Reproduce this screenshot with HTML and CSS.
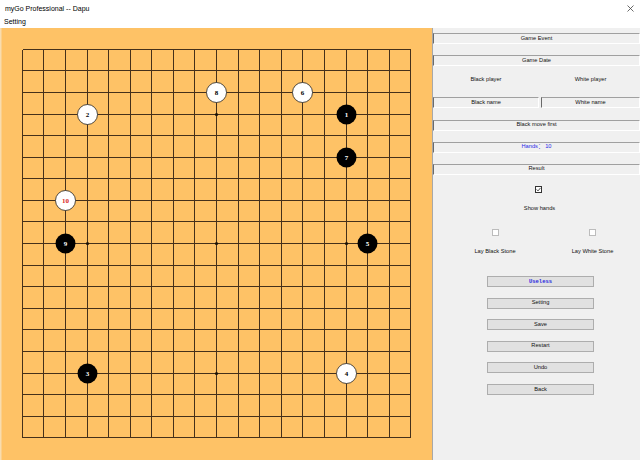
FILE: index.html
```html
<!DOCTYPE html>
<html>
<head>
<meta charset="utf-8">
<link rel="stylesheet" href="styles.css">
</head>
<body>
<div class="window">
  <div class="titlebar">
    <span class="title">myGo Professional -- Dapu</span>
    <svg class="close" width="7" height="7" viewBox="0 0 7 7"><path d="M0.5 0.5L6.5 6.5M6.5 0.5L0.5 6.5" stroke="#444" stroke-width="0.8"/></svg>
  </div>
  <div class="menubar"><span class="menu-item">Setting</span></div>
  <div class="main">
    <div class="board">
      <svg width="432" height="432" viewBox="0 0 432 432">
        <rect x="0" y="0" width="432" height="432" fill="#fec266"/>
        <rect x="0" y="0" width="1.5" height="432" fill="#f8dcae"/>
        <path shape-rendering="crispEdges" stroke="#45301a" stroke-width="1" fill="none"
          d="M22.5 21.5V409.5M43.5 21.5V409.5M65.5 21.5V409.5M87.5 21.5V409.5M108.5 21.5V409.5M130.5 21.5V409.5M151.5 21.5V409.5M173.5 21.5V409.5M194.5 21.5V409.5M216.5 21.5V409.5M238.5 21.5V409.5M259.5 21.5V409.5M281.5 21.5V409.5M302.5 21.5V409.5M324.5 21.5V409.5M346.5 21.5V409.5M367.5 21.5V409.5M389.5 21.5V409.5M410.5 21.5V409.5
          M22.5 21.5H410.5M22.5 42.5H410.5M22.5 64.5H410.5M22.5 86.5H410.5M22.5 107.5H410.5M22.5 129.5H410.5M22.5 150.5H410.5M22.5 172.5H410.5M22.5 193.5H410.5M22.5 215.5H410.5M22.5 237.5H410.5M22.5 258.5H410.5M22.5 280.5H410.5M22.5 301.5H410.5M22.5 323.5H410.5M22.5 345.5H410.5M22.5 366.5H410.5M22.5 388.5H410.5M22.5 409.5H410.5"/>
        <g fill="#1a1208">
          <circle cx="87.5" cy="86.5" r="1.6"/><circle cx="216.5" cy="86.5" r="1.6"/><circle cx="346.5" cy="86.5" r="1.6"/>
          <circle cx="87.5" cy="215.5" r="1.6"/><circle cx="216.5" cy="215.5" r="1.6"/><circle cx="346.5" cy="215.5" r="1.6"/>
          <circle cx="87.5" cy="345.5" r="1.6"/><circle cx="216.5" cy="345.5" r="1.6"/><circle cx="346.5" cy="345.5" r="1.6"/>
        </g>
        <g class="stones">
          <circle class="black" cx="346.5" cy="86.5" r="10"/><text class="num-w" x="346.5" y="89">1</text>
          <circle class="white" cx="87.5" cy="86.5" r="10"/><text class="num-b" x="87.5" y="89">2</text>
          <circle class="black" cx="87.5" cy="345.5" r="10"/><text class="num-w" x="87.5" y="348">3</text>
          <circle class="white" cx="346.5" cy="345.5" r="10"/><text class="num-b" x="346.5" y="348">4</text>
          <circle class="black" cx="367.5" cy="215.5" r="10"/><text class="num-w" x="367.5" y="218">5</text>
          <circle class="white" cx="302.5" cy="64.5" r="10"/><text class="num-b" x="302.5" y="67">6</text>
          <circle class="black" cx="346.5" cy="129.5" r="10"/><text class="num-w" x="346.5" y="132">7</text>
          <circle class="white" cx="216.5" cy="64.5" r="10"/><text class="num-b" x="216.5" y="67">8</text>
          <circle class="black" cx="65.5" cy="215.5" r="10"/><text class="num-w" x="65.5" y="218">9</text>
          <circle class="white" cx="65.5" cy="172.5" r="10"/><text class="num-r" x="65.5" y="175">10</text>
        </g>
      </svg>
    </div>
    <div class="panel">
      <div class="field">Game Event</div>
      <div class="field f-date">Game Date</div>
      <div class="pair players"><span class="lbl">Black player</span><span class="lbl">White player</span></div>
      <div class="pair names"><div class="field">Black name</div><div class="field">White name</div></div>
      <div class="field f-move">Black move first</div>
      <div class="field f-hands"><span class="hands">Hands：&nbsp;10</span></div>
      <div class="field f-result">Result</div>
      <div class="check-row"><span class="checkbox checked"><svg width="5" height="5" viewBox="0 0 5 5"><path d="M0.6 2.4L2 3.9L4.5 0.9" stroke="#222" stroke-width="0.8" fill="none"/></svg></span></div>
      <div class="show-hands">Show hands</div>
      <div class="lay-checks"><span class="cell"><span class="checkbox"></span></span><span class="cell"><span class="checkbox"></span></span></div>
      <div class="lay-labels"><span class="cell">Lay Black Stone</span><span class="cell">Lay White Stone</span></div>
      <div class="btn btn-first"><span class="useless">Useless</span></div>
      <div class="btn">Setting</div>
      <div class="btn">Save</div>
      <div class="btn">Restart</div>
      <div class="btn">Undo</div>
      <div class="btn">Back</div>
    </div>
  </div>
</div>
</body>
</html>
```
FILE: styles.css
```css
* { box-sizing: border-box; }
html, body { margin: 0; padding: 0; }
body {
  width: 640px;
  height: 460px;
  overflow: hidden;
  background: #fff;
  font-family: "Liberation Sans", Arial, sans-serif;
}
.window { width: 640px; height: 460px; display: flex; flex-direction: column; }
.titlebar {
  height: 15px;
  display: flex;
  align-items: center;
  justify-content: space-between;
  padding: 1px 6px 0 5px;
  font-size: 7px;
  color: #000;
  background: #fff;
}
.close { display: block; }
.menubar {
  height: 13px;
  display: flex;
  align-items: center;
  padding-left: 4px;
  font-size: 7px;
  background: #fff;
}
.main { flex: 1; display: flex; }
.board { width: 432px; height: 432px; }
.board svg { display: block; }
.stones .black { fill: #000; }
.stones .white { fill: #fff; stroke: #222; stroke-width: 0.8; }
.stones text {
  font-family: "Liberation Serif", serif;
  font-weight: bold;
  font-size: 7px;
  text-anchor: middle;
}
.num-w { fill: #fff; }
.num-b { fill: #000; }
.num-r { fill: #d81c1c; }
.panel {
  width: 208px;
  height: 432px;
  background: #f0f0f0;
  border-left: 1px solid #a8a8a8;
  display: flex;
  flex-direction: column;
  padding-top: 5px;
  font-size: 5.7px;
  color: #111;
  line-height: 1;
}
.field {
  height: 11px;
  border-top: 1px solid #a0a0a0;
  border-left: 1px solid #6a6a6a;
  border-right: 1px solid #fff;
  border-bottom: 1px solid #fff;
  display: flex;
  align-items: center;
  justify-content: center;
}
.f-date { margin-top: 11px; }
.pair { display: grid; grid-template-columns: 106px 1fr; column-gap: 2px; height: 11px; }
.players { margin-top: 8px; }
.names { margin-top: 12px; }
.lbl { display: flex; align-items: center; justify-content: center; }
.f-move { margin-top: 11.5px; }
.f-hands { margin-top: 11px; }
.f-result { margin-top: 11px; }
.hands { color: #2a2ae8; font-family: "Liberation Sans", "Noto Sans CJK SC", sans-serif; }
.check-row { margin-top: 11.5px; height: 7px; padding-left: 101.5px; display: flex; }
.checkbox {
  width: 7px;
  height: 7px;
  background: #fff;
  border: 1px solid #bcbcbc;
  display: flex;
  align-items: center;
  justify-content: center;
}
.checkbox.checked { border-color: #333; }
.checkbox svg { display: block; }
.show-hands {
  margin-top: 12.5px;
  height: 7px;
  padding-left: 6px;
  display: flex;
  align-items: center;
  justify-content: center;
}
.lay-checks, .lay-labels { display: grid; grid-template-columns: 124px 71px; height: 7px; }
.lay-checks { margin-top: 16.5px; }
.lay-labels { margin-top: 12.5px; }
.cell { display: flex; align-items: center; justify-content: center; }
.btn {
  margin-left: 54px;
  width: 107px;
  height: 11px;
  margin-top: 10.6px;
  background: #e1e1e1;
  border: 1px solid #adadad;
  display: flex;
  align-items: center;
  justify-content: center;
}
.btn-first { margin-top: 20.5px; }
.useless { color: #2a2ae0; font-family: "Liberation Mono", monospace; font-weight: bold; font-size: 5.5px; }
```
